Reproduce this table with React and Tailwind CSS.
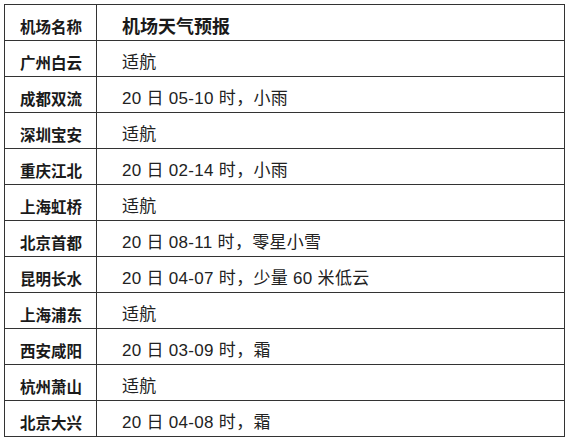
const rows = [
  ['广州白云', '适航'],
  ['成都双流', '20 日 05-10 时，小雨'],
  ['深圳宝安', '适航'],
  ['重庆江北', '20 日 02-14 时，小雨'],
  ['上海虹桥', '适航'],
  ['北京首都', '20 日 08-11 时，零星小雪'],
  ['昆明长水', '20 日 04-07 时，少量 60 米低云'],
  ['上海浦东', '适航'],
  ['西安咸阳', '20 日 03-09 时，霜'],
  ['杭州萧山', '适航'],
  ['北京大兴', '20 日 04-08 时，霜'],
];

const font = { fontFamily: '"Liberation Sans", "Noto Sans CJK SC", sans-serif' };

export default function App() {
  return (
    <div className="w-[569px] h-[443px] bg-white pt-[4px] pl-[4px]" style={font}>
      <div className="w-[561px] border-t-[1.5px] border-l-[1.5px] border-[#333]">
        <div className="flex h-[36px] border-b-[1.5px] border-[#333]">
          <div className="w-[92px] shrink-0 border-r-[1.5px] border-[#333] pl-[15px] pt-[14px] leading-[18px] text-[15.5px] font-bold text-[#1a1a1a]">
            机场名称
          </div>
          <div className="flex-1 border-r-[1.5px] border-[#333] pl-[25px] pt-[13px] leading-[18px] text-[18px] font-bold text-[#1a1a1a]">
            机场天气预报
          </div>
        </div>
        {rows.map(([name, text]) => (
          <div key={name} className="flex h-[36px] border-b-[1.5px] border-[#333]">
            <div className="w-[92px] shrink-0 border-r-[1.5px] border-[#333] pl-[15px] pt-[14px] leading-[18px] text-[15.5px] font-bold text-[#1a1a1a]">
              {name}
            </div>
            <div className="flex-1 border-r-[1.5px] border-[#333] pl-[25px] pt-[13px] leading-[18px] text-[17px] tracking-[0.3px] text-[#222] whitespace-pre">
              {text}
            </div>
          </div>
        ))}
      </div>
    </div>
  );
}
